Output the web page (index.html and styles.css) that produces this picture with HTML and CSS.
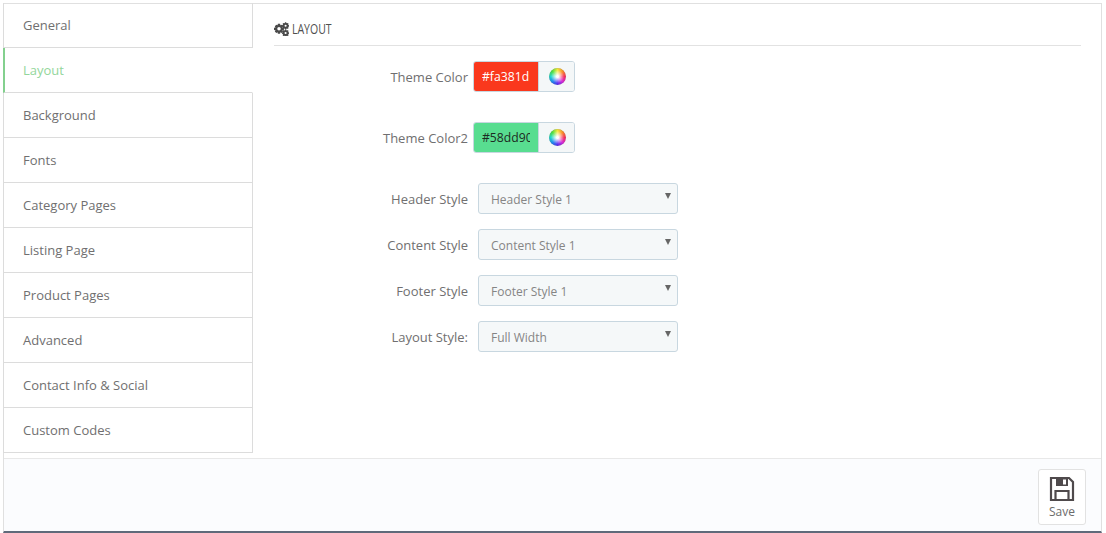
FILE: index.html
```html
<!DOCTYPE html>
<html lang="en">
<head>
<meta charset="utf-8">
<title>Layout settings</title>
<link rel="stylesheet" href="styles.css">
</head>
<body>
<div class="panel">
  <div class="main">
    <ul class="tabs">
      <li class="tab">General</li>
      <li class="tab active">Layout</li>
      <li class="tab">Background</li>
      <li class="tab">Fonts</li>
      <li class="tab">Category Pages</li>
      <li class="tab">Listing Page</li>
      <li class="tab">Product Pages</li>
      <li class="tab">Advanced</li>
      <li class="tab">Contact Info &amp; Social</li>
      <li class="tab">Custom Codes</li>
    </ul>
    <section class="content">
      <h2 class="heading">
        <svg class="cogs" viewBox="0 0 16 14" width="16" height="14" aria-hidden="true">
          <g fill="#4a4a4a">
            <path fill-rule="evenodd" d="M4.900 1.800h2.200l.3 1.500 1.200-.6 1.500 1.500-.7 1.200 1.500.4v2.100l-1.500.4.7 1.200-1.500 1.500-1.200-.7-.3 1.500H4.900l-.4-1.500-1.200.7-1.500-1.500.7-1.200-1.500-.4V5.800l1.500-.4-.7-1.200 1.500-1.500 1.200.6zM6 5.100a1.750 1.750 0 1 0 0 3.500 1.750 1.750 0 0 0 0-3.500z"/>
            <path fill-rule="evenodd" d="M12 .2h1.200l.2.800.7.3.7-.4.8.8-.4.7.3.7.8.2v1.200l-.8.2-.3.7.4.7-.8.8-.7-.4-.7.3-.2.800H12l-.2-.8-.7-.3-.7.4-.8-.8.4-.7-.3-.7-.8-.2V3.300l.8-.2.3-.7-.4-.7.8-.8.7.4.7-.3zM12.600 2.700a1.050 1.050 0 1 0 0 2.100 1.050 1.050 0 0 0 0-2.100z"/>
            <path fill-rule="evenodd" d="M12 7.400h1.200l.2.8.7.3.7-.4.8.8-.4.7.3.7.8.2v1.200l-.8.2-.3.7.4.7-.8.8-.7-.4-.7.3-.2.800H12l-.2-.8-.7-.3-.7.4-.8-.8.4-.7-.3-.7-.8-.2v-1.200l.8-.2.3-.7-.4-.7.8-.8.7.4.7-.3zM12.600 9.900a1.050 1.050 0 1 0 0 2.100 1.050 1.050 0 0 0 0-2.100z"/>
          </g>
        </svg>
        <span class="heading-text">LAYOUT</span>
      </h2>
      <form class="form">
        <div class="row color-row">
          <label class="label">Theme Color</label>
          <div class="picker">
            <input class="swatch swatch-red" type="text" value="#fa381d">
            <span class="addon"><i class="wheel"></i></span>
          </div>
        </div>
        <div class="row color-row">
          <label class="label">Theme Color2</label>
          <div class="picker">
            <input class="swatch swatch-green" type="text" value="#58dd90">
            <span class="addon"><i class="wheel"></i></span>
          </div>
        </div>
        <div class="row select-row">
          <label class="label">Header Style</label>
          <div class="select"><select><option>Header Style 1</option></select></div>
        </div>
        <div class="row select-row">
          <label class="label">Content Style</label>
          <div class="select"><select><option>Content Style 1</option></select></div>
        </div>
        <div class="row select-row">
          <label class="label">Footer Style</label>
          <div class="select"><select><option>Footer Style 1</option></select></div>
        </div>
        <div class="row select-row">
          <label class="label">Layout Style:</label>
          <div class="select"><select><option>Full Width</option></select></div>
        </div>
      </form>
    </section>
  </div>
  <footer class="footer">
    <button class="save" type="button">
      <svg viewBox="0 0 26 26" width="26" height="26" aria-hidden="true">
        <path fill="none" stroke="#4f4a4c" stroke-width="2.200" d="M2 2h18l4 4v18H2z"/>
        <path fill="#4f4a4c" d="M7 2h12v8H7z"/>
        <path fill="#fff" d="M14 3.500h3v5h-3z"/>
        <path fill="none" stroke="#4f4a4c" stroke-width="2.200" d="M6.500 24v-9h13v9"/>
      </svg>
      <span>Save</span>
    </button>
  </footer>
</div>
</body>
</html>
```
FILE: styles.css
```css
* { box-sizing: border-box; }
html, body { margin: 0; padding: 0; background: #fff; }
body {
  padding: 3px 4px 0 3px;
  font-family: "Open Sans", sans-serif;
  font-size: 13px;
  color: #6c6c6c;
  overflow: hidden;
}
.panel {
  height: 530px;
  display: flex;
  flex-direction: column;
  border: 1px solid #e0e0e0;
  border-bottom: 2px solid #5f6a7a;
}
.main { display: flex; flex: 1; min-height: 0; }
.tabs {
  list-style: none;
  margin: -1px 0 0 -1px;
  padding: 0;
  width: 250px;
  flex: none;
}
.tab {
  height: 45px;
  line-height: 45px;
  padding-left: 19px;
  border: 1px solid #dcdcdc;
  border-top: 0;
  color: #706f70;
}
.tab.active {
  color: #93d69b;
  border-right-color: #fff;
  border-left: 2px solid #83d08e;
  padding-left: 18px;
}
.content { flex: 1; padding: 0 20px 0 21px; }
.heading {
  margin: 0;
  height: 42px;
  padding-top: 8px;
  display: flex;
  align-items: center;
  gap: 3px;
  border-bottom: 1px solid #e2e2e2;
  font-size: 14px;
  font-weight: 400;
  color: #4f4f4f;
}
.cogs { margin-left: -1px; }
.heading-text {
  display: inline-block;
  transform: scaleX(0.75);
  transform-origin: left center;
}
.form { display: flex; flex-direction: column; padding-top: 15px; }
.row { display: flex; align-items: center; height: 31px; }
.label { width: 194px; flex: none; text-align: right; color: #706f70; }
.color-row { margin-bottom: 30px; }
.select-row { margin-bottom: 15px; }
.picker {
  margin-left: 5px;
  width: 102px;
  height: 31px;
  display: flex;
  border: 1px solid #c8d7e0;
  border-radius: 3px;
  overflow: hidden;
}
.swatch {
  width: 64px;
  height: 100%;
  border: 0;
  padding: 0 8px;
  font: 12.2px "Open Sans", sans-serif;
  outline: 0;
}
.swatch-red { background: #fa381d; color: #fff; }
.swatch-green { background: #58dd90; color: #1d2a22; }
.addon {
  flex: 1;
  background: #f4f7f8;
  border-left: 1px solid #c8d7e0;
  display: flex;
  align-items: center;
  justify-content: center;
  padding-left: 2px;
}
.wheel {
  width: 17px;
  height: 17px;
  border-radius: 50%;
  background:
    radial-gradient(circle, #fff 0 8%, rgba(255,255,255,0) 55%),
    conic-gradient(#f2e83a, #fb8f2c, #f5305e, #d82ad8, #5a30f0, #2088f0, #20d8c8, #50e040, #f2e83a);
  box-shadow: inset 0 0 1px rgba(60,60,60,.8);
}
.select {
  position: relative;
  margin-left: 10px;
  width: 200px;
  height: 31px;
}
.select select {
  width: 100%;
  height: 100%;
  appearance: none;
  -webkit-appearance: none;
  border: 1px solid #c8d7e0;
  border-radius: 3px;
  background: #f5f8f9;
  padding: 2px 12px 0;
  font: 12px "Open Sans", sans-serif;
  color: #858585;
}
.select::after {
  content: "";
  position: absolute;
  top: 10px;
  right: 7px;
  border-left: 3px solid transparent;
  border-right: 3px solid transparent;
  border-top: 6px solid #666;
}
.footer {
  flex: none;
  height: 73px;
  display: flex;
  justify-content: flex-end;
  align-items: flex-start;
  padding: 10px 15px 0 0;
  background: #fbfcfe;
  border-top: 1px solid #e8e8e8;
}
.save {
  width: 48px;
  height: 56px;
  display: flex;
  flex-direction: column;
  align-items: center;
  gap: 1px;
  padding: 6px 0 0;
  background: #fff;
  border: 1px solid #e2e2e2;
  border-radius: 3px;
  font: 12px "Open Sans", sans-serif;
  color: #6c6c6c;
}
```
